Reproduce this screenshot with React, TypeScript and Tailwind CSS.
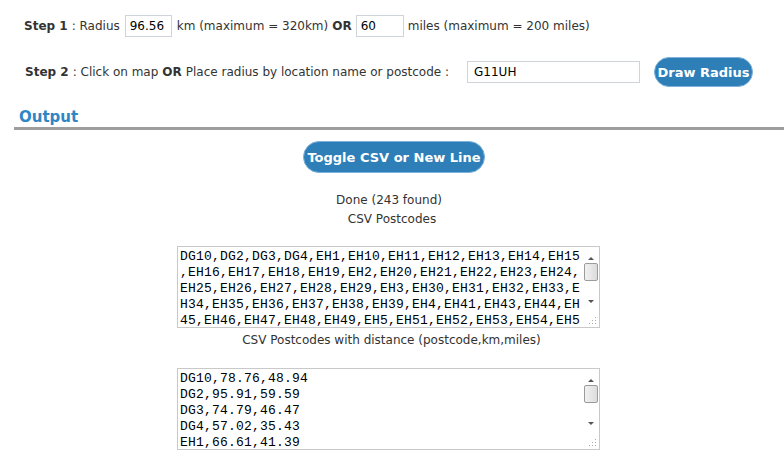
import React from "react";

const csvList =
    "DG10,DG2,DG3,DG4,EH1,EH10,EH11,EH12,EH13,EH14,EH15,EH16,EH17,EH18,EH19,EH2,EH20,EH21,EH22,EH23,EH24,EH25,EH26,EH27,EH28,EH29,EH3,EH30,EH31,EH32,EH33,EH34,EH35,EH36,EH37,EH38,EH39,EH4,EH41,EH43,EH44,EH45,EH46,EH47,EH48,EH49,EH5,EH51,EH52,EH53,EH54,EH5".slice(0, 250);

const distList = [
    "DG10,78.76,48.94",
    "DG2,95.91,59.59",
    "DG3,74.79,46.47",
    "DG4,57.02,35.43",
    "EH1,66.61,41.39",
];

const Button = ({ label, className }: { label: string; className?: string }) => (
    <button
        className={`rounded-full bg-[#2e7fb8] border border-[#7db2dc] text-white font-bold text-[13px] leading-none whitespace-nowrap flex items-center justify-center ${className}`}
    >
        {label}
    </button>
);

const ScrollBar = () => (
    <div className="w-[17px] shrink-0 flex flex-col">
        <div className="h-[64px] flex flex-col items-center bg-white">
            <div className="h-[13px] flex items-end justify-center">
                <div className="w-0 h-0 border-l-[3px] border-r-[3px] border-b-[3px] border-l-transparent border-r-transparent border-b-[#555]" />
            </div>
            <div className="mt-[3px] w-[14px] h-[18px] rounded-[2px] border border-[#9b9b9b] bg-gradient-to-r from-[#f1f1f1] to-[#dcdcdc]" />
            <div className="flex-1" />
            <div className="h-[14px] flex items-start justify-center pt-[3px]">
                <div className="w-0 h-0 border-l-[3px] border-r-[3px] border-t-[3px] border-l-transparent border-r-transparent border-t-[#555]" />
            </div>
        </div>
        <div className="flex-1 relative">
            <svg className="absolute right-[2px] bottom-[2px]" width="8" height="8" viewBox="0 0 8 8">
                <rect x="6" y="0" width="1" height="1" fill="#aaa" />
                <rect x="3" y="3" width="1" height="1" fill="#aaa" />
                <rect x="6" y="3" width="1" height="1" fill="#aaa" />
                <rect x="0" y="6" width="1" height="1" fill="#aaa" />
                <rect x="3" y="6" width="1" height="1" fill="#aaa" />
                <rect x="6" y="6" width="1" height="1" fill="#aaa" />
            </svg>
        </div>
    </div>
);

const TextBox = ({ children, className }: { children: React.ReactNode; className?: string }) => (
    <div className={`ml-[177px] w-[423px] h-[82px] border border-[#c9c9c9] flex justify-between bg-white ${className}`}>
        <div className="w-[404px] overflow-hidden pl-[2px] pt-[2px] font-['Liberation_Mono',monospace] text-[13px] tracking-[0.2px] leading-[16px] text-black break-all [line-break:anywhere]">
            {children}
        </div>
        <ScrollBar />
    </div>
);

const App = () => {
    const inputCls =
        "h-[22px] border border-[#cfd4da] px-[4px] text-[12px] text-black bg-white outline-none";

    return (
        <div className="w-[784px] h-[459px] overflow-hidden bg-white text-[#333] text-[12px] font-['Verdana','DejaVu_Sans',sans-serif]">
            {/* step 1 */}
            <div className="pt-[15px] pl-[24px] flex items-center h-[37px]">
                <span className="font-bold">Step 1</span>
                <span className="ml-[4px]">: Radius</span>
                <input className={`${inputCls} w-[47px] ml-[5px]`} defaultValue="96.56" />
                <span className="ml-[5px]">km (maximum = 320km)</span>
                <span className="font-bold ml-[4px]">OR</span>
                <input className={`${inputCls} w-[48px] ml-[4px]`} defaultValue="60" />
                <span className="ml-[4px]">miles (maximum = 200 miles)</span>
            </div>

            {/* step 2 */}
            <div className="mt-[20px] pl-[25px] flex items-center h-[30px]">
                <span className="font-bold">Step 2</span>
                <span className="ml-[4px]">: Click on map</span>
                <span className="font-bold ml-[4px]">OR</span>
                <span className="ml-[4px]">Place radius by location name or postcode :</span>
                <input className={`${inputCls} w-[173px] ml-[18px] px-[6px]`} defaultValue="G11UH" />
                <Button label="Draw Radius" className="ml-[14px] w-[99px] h-[30px]" />
            </div>

            {/* output heading */}
            <div className="mt-[20px] pl-[19px] text-[15px] font-bold text-[#2f86c4] leading-[20px]">Output</div>
            <div className="ml-[14px] h-[3px] bg-[#9e9e9e]" />

            <div className="flex flex-col items-center">
                <Button label="Toggle CSV or New Line" className="mt-[11px] ml-[4px] w-[182px] h-[32px]" />
                <div className="mt-[18px] leading-[19px] text-center">
                    <div className="-ml-[6px]">Done (243 found)</div>
                    <div>CSV Postcodes</div>
                </div>
            </div>

            <TextBox className="mt-[17px]">{csvList}</TextBox>

            <div className="mt-[3px] text-center leading-[19px] -ml-[1px]">
                CSV Postcodes with distance (postcode,km,miles)
            </div>

            <TextBox className="mt-[18px]">
                {distList.map((d) => (
                    <div key={d}>{d}</div>
                ))}
            </TextBox>

            <div className="mt-[10px] pl-[19px] text-[15px] font-bold text-[#2f86c4] leading-[20px]">Instructions</div>
        </div>
    );
};

export default App;
